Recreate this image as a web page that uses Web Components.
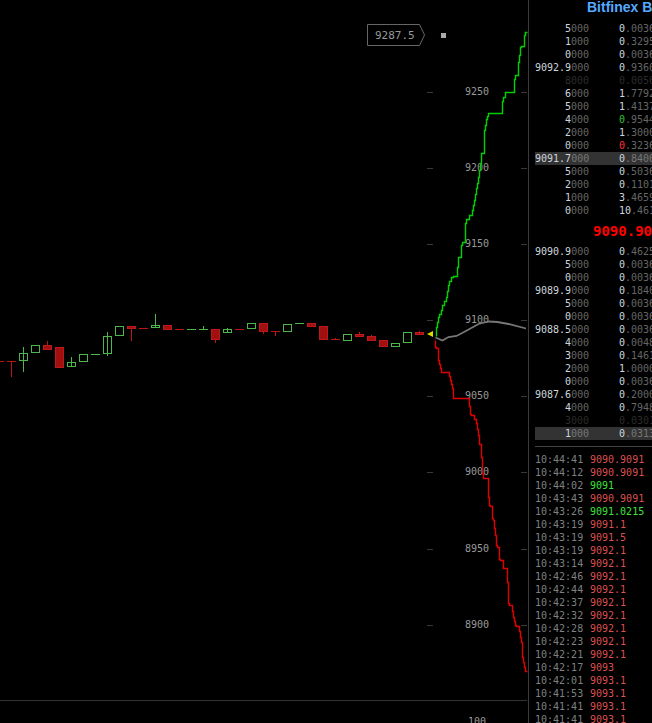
<!DOCTYPE html>
<html>
<head>
<meta charset="utf-8">
<title>Bitfinex</title>
<style>
    html, body { margin: 0; height: 100%; background: #000; overflow: hidden; }
    body { display: flex; font-family: "DejaVu Sans Mono", "Liberation Mono", monospace; font-size: 10px; }
</style>
</head>
<body>
<depth-chart></depth-chart>
<side-pane>
    <span slot="title">Bitfinex B</span>
    <book-list id="asks" slot="asks"></book-list>
    <span slot="mid">9090.90</span>
    <book-list id="bids" slot="bids"></book-list>
    <trade-list slot="trades"></trade-list>
</side-pane>

<script>
// [close, low-side tail, qty head, qty tail, state]
const ASKS = [
    ["5", "000", "0", ".0036"], ["1", "000", "0", ".3295"], ["0", "000", "0", ".0036"],
    ["9092.9", "000", "0", ".9360"], ["8", "000", "0", ".0050", "dim"], ["6", "000", "1", ".7792"],
    ["5", "000", "1", ".4137"], ["4", "000", "0", ".9544", "up"], ["2", "000", "1", ".3000"],
    ["0", "000", "0", ".3236", "down"], ["9091.7", "000", "0", ".8400", "hl"], ["5", "000", "0", ".5036"],
    ["2", "000", "0", ".1101"], ["1", "000", "3", ".4659"], ["0", "000", "10", ".461"]
];
const BIDS = [
    ["9090.9", "000", "0", ".4625"], ["5", "000", "0", ".0036"], ["0", "000", "0", ".0036"],
    ["9089.9", "000", "0", ".1840"], ["5", "000", "0", ".0036"], ["0", "000", "0", ".0036"],
    ["9088.5", "000", "0", ".0036"], ["4", "000", "0", ".0048"], ["3", "000", "0", ".1461"],
    ["2", "000", "1", ".0000"], ["0", "000", "0", ".0036"], ["9087.6", "000", "0", ".2000"],
    ["4", "000", "0", ".7948"], ["3", "000", "0", ".0301", "dim"], ["1", "000", "0", ".0313", "hl"]
];
const TRADES = [
    ["10:44:41", "9090.9091", 0], ["10:44:12", "9090.9091", 0], ["10:44:02", "9091", 1],
    ["10:43:43", "9090.9091", 0], ["10:43:26", "9091.0215", 1], ["10:43:19", "9091.1", 0],
    ["10:43:19", "9091.5", 0], ["10:43:19", "9092.1", 0], ["10:43:14", "9092.1", 0],
    ["10:42:46", "9092.1", 0], ["10:42:44", "9092.1", 0], ["10:42:37", "9092.1", 0],
    ["10:42:32", "9092.1", 0], ["10:42:28", "9092.1", 0], ["10:42:23", "9092.1", 0],
    ["10:42:21", "9092.1", 0], ["10:42:17", "9093", 0], ["10:42:01", "9093.1", 0],
    ["10:41:53", "9093.1", 0], ["10:41:41", "9093.1", 0], ["10:41:41", "9093.1", 0]
];

// cx, up, body top, body bottom, wick top, wick bottom
const CANDLES = [
    [-0.5, 0, 361, 361], [11.5, 0, 361, 361, 361, 376], [23.5, 1, 353, 360, 347, 371],
    [35.5, 1, 345, 352], [47.5, 0, 345, 349, 341], [59.5, 0, 347, 367],
    [71.5, 1, 362, 366, 357], [83.5, 1, 354, 361], [95.5, 1, 354, 354],
    [107.5, 1, 336, 353, 332, 355], [119.5, 1, 326, 335], [131.5, 0, 326, 328, 326, 340],
    [143.5, 0, 328, 328], [155.5, 1, 325, 327, 314], [167.5, 0, 325, 329],
    [179.5, 0, 329, 329], [191.5, 1, 329, 329], [203.5, 1, 329, 329, 326],
    [215.5, 0, 329, 339, 329, 342], [227.5, 1, 329, 332, 328], [239.5, 0, 329, 329],
    [251.5, 1, 323, 328], [263.5, 0, 323, 331, 323, 333], [275.5, 0, 331, 331, 331, 335],
    [287.5, 1, 324, 331], [299.5, 1, 323, 323], [311.5, 0, 323, 326],
    [323.5, 0, 326, 339], [335.5, 0, 339, 339, 338], [347.5, 1, 334, 340],
    [359.5, 0, 334, 336, 332], [371.5, 0, 336, 340, 335], [383.5, 0, 340, 346],
    [395.5, 1, 343, 346], [407.5, 1, 332, 342], [419.5, 0, 332, 334, 331]
];

const GREEN_DEPTH = [[436,336],[437,327],[439,317],[442,310],[444,305],[447,297],[449,285],[453,277],[457,276],[459,257],[461,257],[462,245],[465,242],[466,223],[472,215],[475,200],[477,188],[479,177],[481,163],[482,153],[484,153],[485,130],[487,119],[489,113],[502,113],[503,101],[506,92],[514,92],[515,79],[518,75],[519,62],[521,47],[524,46],[525,35],[527,32]];
const RED_DEPTH = [[435,340],[436,347],[438,348],[439,360],[442,372],[449,372],[451,380],[453,388],[454,398],[469,398],[471,414],[474,415],[477,423],[479,435],[479,443],[481,444],[482,457],[483,473],[485,478],[488,478],[489,497],[490,505],[492,506],[493,518],[494,520],[496,535],[497,545],[499,547],[500,559],[503,560],[504,568],[507,568],[508,582],[509,603],[512,605],[514,617],[516,625],[519,626],[522,642],[523,657],[525,667],[527,671]];
const MEAN_LINE = "435.5,337.5 442.5,340.5 448.5,337 456.5,336 465,331.5 478.5,324 488.5,321.5 497.5,322 508.5,324 526,328.5";

// turns the traced points into small stair steps, the way the depth is drawn
function stairs(points) {
    const px = (v) => Math.round(v) + 0.5;
    let d = `M${px(points[0][0])} ${px(points[0][1])}`;
    for (let i = 1; i < points.length; i++) {
        const [x0, y0] = points[i - 1];
        const [x1, y1] = points[i];
        const n = Math.max(1, Math.min(Math.abs(x1 - x0), Math.round(Math.abs(y1 - y0) / 4)));
        for (let s = 1; s <= n; s++) {
            d += `V${px(y0 + (y1 - y0) * s / n)}H${px(x0 + (x1 - x0) * s / n)}`;
        }
    }
    return d;
}

class DepthChart extends HTMLElement {
    constructor() {
        super();
        this.attachShadow({mode: "open"});
        const labels = [[9250, 92], [9200, 168], [9150, 244], [9100, 320], [9050, 396], [9000, 472], [8950, 549], [8900, 625]];
        let axis = "";
        for (const [value, y] of labels) {
            axis += `<path class="tick" d="M427 ${y}.5H433M521 ${y}.5H527"/>`;
            axis += `<text class="axis" x="465" y="${y + 3}">${value}</text>`;
        }
        let candles = "";
        for (const [cx, up, top, bottom, wickTop, wickBottom] of CANDLES) {
            const cls = up ? "up" : "down";
            const wTop = wickTop === undefined ? top : wickTop;
            const wBottom = wickBottom === undefined ? bottom : wickBottom;
            if (wTop < top || wBottom > bottom) {
                candles += `<path class="${cls}" d="M${cx} ${wTop}V${wBottom + 1}"/>`;
            }
            if (top === bottom) {
                candles += `<path class="${cls}" d="M${cx - 4.5} ${top + 0.5}H${cx + 4.5}"/>`;
            } else {
                candles += `<rect class="${cls}" x="${cx - 4}" y="${top + 0.5}" width="8" height="${bottom - top}"/>`;
            }
        }
        this.shadowRoot.innerHTML = `
            <style>
                :host { display: block; flex: 0 0 528px; height: 723px; background: #000; }
                svg { display: block; }
                text { font-family: "DejaVu Sans Mono", "Liberation Mono", monospace; }
                .axis { font-size: 10px; fill: #999; }
                .tick { stroke: #383838; fill: none; shape-rendering: crispEdges; }
                .up { stroke: #4cb84c; fill: none; shape-rendering: crispEdges; }
                path.down { stroke: #b81616; fill: none; shape-rendering: crispEdges; }
                rect.down { stroke: #c01818; fill: #a01010; shape-rendering: crispEdges; }
                .depth { fill: none; stroke-width: 1.4; }
            </style>
            <svg width="528" height="723" viewBox="0 0 528 723">
                ${axis}
                <path d="M0 700.5H527" stroke="#333" shape-rendering="crispEdges"/>
                <text class="axis" x="468" y="725">100</text>
                ${candles}
                <path d="M427 334L433 331V337Z" fill="#dcdc00"/>
                <path class="depth" stroke="#00d000" d="${stairs(GREEN_DEPTH)}"/>
                <path class="depth" stroke="#e00000" d="${stairs(RED_DEPTH)}"/>
                <polyline points="${MEAN_LINE}" fill="none" stroke="#777" stroke-width="1.8"/>
                <path d="M367.5 24.5H419.5L424.5 35L419.5 45.5H367.5Z" fill="none" stroke="#666"/>
                <text x="375" y="39" font-size="11" fill="#999">9287.5</text>
                <rect x="441" y="33" width="5" height="5" fill="#aaa"/>
            </svg>
        `;
    }
}
customElements.define("depth-chart", DepthChart);

class BookList extends HTMLElement {
    constructor() {
        super();
        this.attachShadow({mode: "open"});
        this.shadowRoot.innerHTML = `
            <style>
                :host { display: block; flex: none; }
                .row { display: grid; grid-template-columns: 54px 1fr; column-gap: 30px; height: 13px; line-height: 14px; white-space: nowrap; overflow: hidden; }
                .price { text-align: right; color: #cdd6df; }
                .qty { color: #cdd6df; }
                .tail { color: #666; }
                .hl { background: #333; }
                .hl .tail { color: #777; }
                .dim, .dim * { color: #2c2c2c; }
                .up { color: #2fc02f; }
                .down { color: #ff3030; }
            </style>
            <div id="rows"></div>
        `;
    }

    set rows(list) {
        this.shadowRoot.getElementById("rows").innerHTML = list.map(([price, priceTail, qty, qtyTail, state]) => `
            <div class="row ${state === "hl" || state === "dim" ? state : ""}">
                <span class="price">${price}<span class="tail">${priceTail}</span></span>
                <span class="qty"><span class="${state === "up" || state === "down" ? state : ""}">${qty}</span><span class="tail">${qtyTail}</span></span>
            </div>`).join("");
    }
}
customElements.define("book-list", BookList);

class TradeList extends HTMLElement {
    constructor() {
        super();
        this.attachShadow({mode: "open"});
        const rows = TRADES.map(([time, price, up]) =>
            `<div class="row"><span class="time">${time}</span><span class="${up ? "up" : "down"}">${price}</span></div>`).join("");
        this.shadowRoot.innerHTML = `
            <style>
                :host { display: block; flex: none; }
                .row { display: grid; grid-template-columns: 55px 1fr; height: 13px; line-height: 14px; white-space: nowrap; }
                .time { color: #7f8080; }
                .up { color: #3fe03f; }
                .down { color: #dc5050; }
            </style>
            ${rows}
        `;
    }
}
customElements.define("trade-list", TradeList);

class SidePane extends HTMLElement {
    constructor() {
        super();
        this.attachShadow({mode: "open"});
        this.shadowRoot.innerHTML = `
            <style>
                :host { display: flex; flex-direction: column; flex: 0 0 124px; box-sizing: border-box; width: 124px; height: 723px; border-left: 1px solid #3a3a3a; padding-left: 6px; overflow: hidden; background: #000; }
                .title { flex: none; height: 22px; padding-left: 52px; font: bold 14px/14px "Liberation Sans", Arial, sans-serif; color: #55aaff; white-space: nowrap; overflow: hidden; }
                .mid { flex: none; height: 28px; line-height: 28px; padding-left: 58px; font-size: 14px; font-weight: bold; color: #f00; white-space: nowrap; overflow: hidden; }
                .rule { flex: none; height: 1px; margin: 6px 0; background: #444; }
            </style>
            <div class="title"><slot name="title"></slot></div>
            <slot name="asks"></slot>
            <div class="mid"><slot name="mid"></slot></div>
            <slot name="bids"></slot>
            <div class="rule"></div>
            <slot name="trades"></slot>
        `;
    }
}
customElements.define("side-pane", SidePane);

document.getElementById("asks").rows = ASKS;
document.getElementById("bids").rows = BIDS;
</script>
</body>
</html>
